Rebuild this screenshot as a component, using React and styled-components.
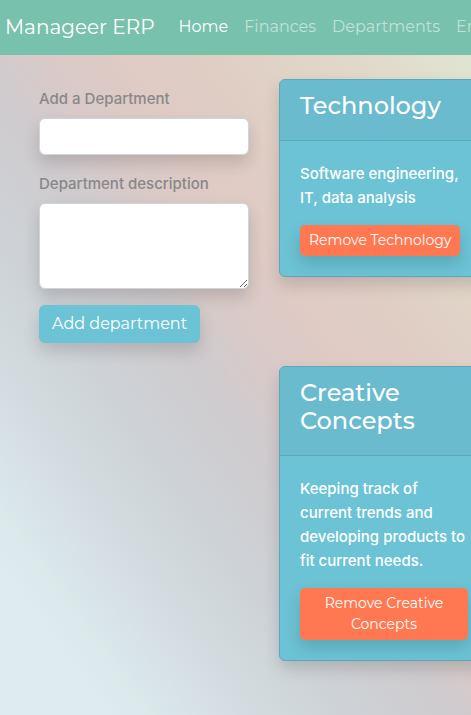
import React from "react";
import styled, { createGlobalStyle, css } from "styled-components";

const display = `Montserrat, Inter, "Liberation Sans", sans-serif`;
const text = `Inter, "Liberation Sans", sans-serif`;

const GlobalStyle = createGlobalStyle`
  *, *::before, *::after { box-sizing: border-box; }
  html { overflow: hidden auto; scrollbar-width: none; }
  body {
    margin: 0;
    font-family: ${text};
    font-size: 15px;
    font-weight: 500;
    line-height: 24px;
    color: #888;
  }
`;

const Page = styled.div`
  min-height: 100vh;
  overflow: hidden;
  background: linear-gradient(
    54deg,
    #deebf1 0%,
    #deebf1 11%,
    #dbe9eb 15%,
    #d5dfe5 22%,
    #d1d9dc 28%,
    #cdd1d5 36%,
    #cfcbce 46%,
    #d8cac9 52%,
    #dfcac4 60%,
    #e0cfc5 71%,
    #e0d5c7 79%,
    #e0dccb 87%,
    #dfe4d0 95%,
    #dfe7d2 100%
  );
`;

const Navbar = styled.nav`
  display: flex;
  align-items: center;
  height: 55px;
  padding: 0 0 2px 5px;
  overflow: hidden;
  white-space: nowrap;
  background: #78c2ad;
  font-family: ${display};
  font-weight: 400;
`;

const Brand = styled.a`
  flex: none;
  margin-right: 24px;
  color: #fff;
  font-size: 20px;
  text-decoration: none;
`;

const NavList = styled.ul`
  display: flex;
  gap: 16px;
  margin: 0;
  padding: 0;
  list-style: none;
`;

const NavLink = styled.a`
  color: ${(p) => (p.$active ? "#fff" : "rgba(255, 255, 255, 0.55)")};
  font-size: 16px;
  text-decoration: none;
`;

const Columns = styled.main`
  display: grid;
  grid-template-columns: repeat(2, minmax(210px, 1fr));
  align-items: start;
  gap: 30px;
  padding: 24px 0 24px 39px;
`;

const Form = styled.form`
  display: flex;
  flex-direction: column;
  align-items: flex-start;
  gap: 16px;
  padding-top: 7px;
`;

const Field = styled.div`
  display: flex;
  flex-direction: column;
  gap: 6px;
  width: 100%;
`;

const Label = styled.label`
  line-height: 26px;
`;

const shadow = css`
  box-shadow: 0 8px 16px rgba(0, 0, 0, 0.15);
`;

const control = css`
  display: block;
  width: 100%;
  padding: 6px 12px;
  border: 1px solid #ced4da;
  border-radius: 6px;
  background: #fff;
  color: #555;
  font: inherit;
  ${shadow}
`;

const Input = styled.input`
  ${control}
  height: 37px;
`;

const Textarea = styled.textarea`
  ${control}
  height: 86px;
  resize: vertical;
`;

const Button = styled.button`
  max-width: 100%;
  border: 0;
  color: #fff;
  font-family: ${display};
  font-weight: 400;
  cursor: pointer;
  ${shadow}
  ${(p) =>
    p.$danger
      ? css`
          padding: 5px 9px;
          border-radius: 5px;
          background: #ff7851;
          font-size: 14px;
          line-height: 21px;
        `
      : css`
          padding: 7px 13px;
          border-radius: 6px;
          background: #6cc3d5;
          font-size: 16px;
          line-height: 24px;
        `}
`;

const CardList = styled.div`
  display: flex;
  flex-direction: column;
  gap: 89px;
`;

const Card = styled.article`
  border: 1px solid #5aa9b9;
  border-radius: 6px;
  background: #6cc3d5;
  color: #fff;
  ${shadow}
`;

const CardHeader = styled.header`
  padding: 12px 20px 20px;
  border-bottom: 1px solid #5aa9b9;
  border-radius: 5px 5px 0 0;
  background: #6abbce;
`;

const CardTitle = styled.h4`
  margin: 0;
  font-family: ${display};
  font-size: 24px;
  font-weight: 500;
  line-height: 28px;
`;

const CardBody = styled.div`
  padding: 21px 20px 20px;
`;

const CardText = styled.p`
  margin: 0 0 15px;
`;

const links = ["Home", "Finances", "Departments", "Employees"];

const departments = [
  { name: "Technology", description: "Software engineering, IT, data analysis" },
  {
    name: "Creative Concepts",
    description:
      "Keeping track of current trends and developing products to fit current needs.",
  },
];

export default function App() {
  return (
    <Page>
      <GlobalStyle />
      <Navbar>
        <Brand href="#">Manageer ERP</Brand>
        <NavList>
          {links.map((label, i) => (
            <li key={label}>
              <NavLink href="#" $active={i === 0}>
                {label}
              </NavLink>
            </li>
          ))}
        </NavList>
      </Navbar>
      <Columns>
        <Form onSubmit={(e) => e.preventDefault()}>
          <Field>
            <Label htmlFor="name">Add a Department</Label>
            <Input id="name" type="text" />
          </Field>
          <Field>
            <Label htmlFor="description">Department description</Label>
            <Textarea id="description" />
          </Field>
          <Button type="submit">Add department</Button>
        </Form>
        <CardList>
          {departments.map((d) => (
            <Card key={d.name}>
              <CardHeader>
                <CardTitle>{d.name}</CardTitle>
              </CardHeader>
              <CardBody>
                <CardText>{d.description}</CardText>
                <Button type="button" $danger>
                  {`Remove ${d.name}`}
                </Button>
              </CardBody>
            </Card>
          ))}
        </CardList>
      </Columns>
    </Page>
  );
}
